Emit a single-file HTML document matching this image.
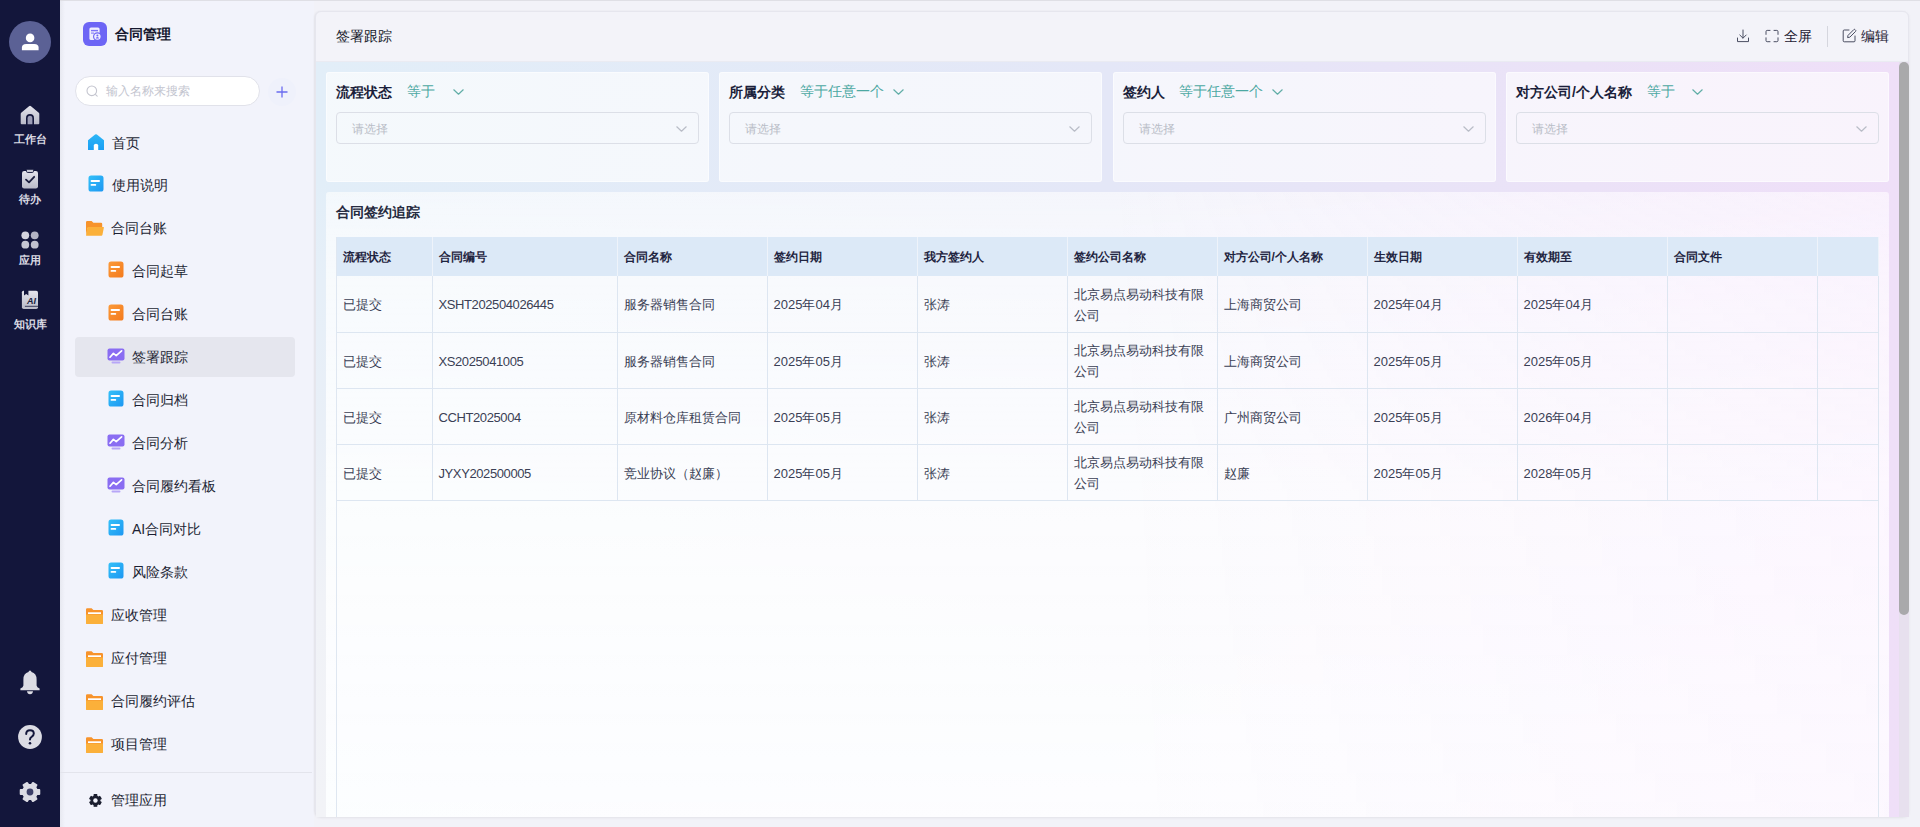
<!DOCTYPE html>
<html><head><meta charset="utf-8">
<style>
*{box-sizing:border-box;margin:0;padding:0}
html,body{width:1920px;height:827px;overflow:hidden;background:#f2f2f8;font-family:"Liberation Sans",sans-serif;color:#1f2337}
.abs{position:absolute}
svg.abs{overflow:visible}
#rail{position:absolute;left:0;top:0;width:60px;height:827px;background:#13163b}
.rtxt{position:absolute;left:0;width:60px;text-align:center;font-size:11.4px;line-height:14px;color:#dadae3;font-weight:bold;white-space:nowrap}
#side{position:absolute;left:60px;top:0;width:254px;height:827px;background:#f2f3fb}
.mi{position:absolute;font-size:14px;line-height:20px;color:#1c1f33;white-space:nowrap}
#topline{position:absolute;left:60px;top:0;width:1860px;height:1px;background:#dfdfe5}
#card{position:absolute;left:315px;top:11px;width:1594px;height:806px;border:1px solid #e6e6ee;border-radius:6px;background:#f3f3f9;overflow:hidden;box-shadow:0 1px 3px rgba(0,0,0,0.06),-1px 0 2px rgba(0,0,0,0.04)}
#body{position:absolute;left:316px;top:62px;width:1583px;height:755px;background:linear-gradient(90deg,#e2eef8 0%,#e4e7f7 50%,#ebe2f7 80%,#efdff8 100%)}
#track{position:absolute;left:1899px;top:62px;width:10px;height:755px;background:#e7e0ee}
#thumb{position:absolute;left:1899px;top:62px;width:10px;height:553px;border-radius:5px 5px 5px 5px;background:#a9a9ab}
.panel{position:absolute;top:72px;width:383px;height:110px;border-radius:3px;background:linear-gradient(90deg,rgba(255,255,255,0.64),rgba(255,255,255,0.64));box-shadow:inset 0 0 0 1px rgba(255,255,255,0.5)}
.plabel{position:absolute;top:82px;font-size:14px;line-height:20px;font-weight:bold;color:#1b1f3b;white-space:nowrap}
.pop{position:absolute;top:81px;margin-left:-1px;font-size:14px;line-height:20px;color:#4ca8a2;white-space:nowrap}
.sel{position:absolute;top:112px;width:363px;height:32px;border:1px solid #dcdfe7;border-radius:4px}
.ph{position:absolute;top:121px;font-size:12px;line-height:16px;color:#b9bdc7;white-space:nowrap}
#tcard{position:absolute;left:326px;top:192px;width:1563px;height:625px;border-radius:3px 3px 0 0;background:linear-gradient(90deg,rgba(250,238,255,0) 50%,rgba(250,238,255,0.3) 100%),linear-gradient(180deg,rgba(255,255,255,0.62) 0px,rgba(255,255,255,0.74) 90px,rgba(255,255,255,0.86) 300px,rgba(255,255,255,0.9) 100%)}
#tbox{position:absolute;left:336px;top:237px;width:1543px;height:580px;border-left:1px solid #dfe7f1;border-right:1px solid #dfe7f1}
table{position:absolute;left:337px;top:237px;border-collapse:collapse;table-layout:fixed}
th{background:#dce9f7;height:39px;font-size:12px;font-weight:bold;text-align:left;padding:2px 0 0 6px;color:#1f2440;border-right:1px solid #eef3fa;white-space:nowrap}
td{height:56px;font-size:13px;line-height:21px;text-align:left;padding:2px 0 0 6px;color:#3a3f55;border-right:1px solid #dde6f1;border-bottom:1px solid #dde6f1}
td:nth-child(2){letter-spacing:-0.4px}
</style></head><body>
<div id="rail"></div>

<!-- avatar -->
<div class="abs" style="left:9px;top:21px;width:42px;height:42px;border-radius:50%;background:#5b6195"></div>
<svg class="abs" style="left:18px;top:30px" width="24" height="24" viewBox="0 0 24 24">
 <circle cx="12.1" cy="7.9" r="4.3" fill="#fff"/>
 <path d="M3.9 20.3 L3.9 17.6 Q3.9 13.9 8.2 13.9 L16.3 13.9 Q20.6 13.9 20.6 17.6 L20.6 20.3 Z" fill="#fff"/>
</svg>
<!-- home -->
<svg class="abs" style="left:20px;top:105px" width="20" height="20" viewBox="0 0 20 20">
 <defs><linearGradient id="gr1" x1="0" y1="0" x2="0" y2="1"><stop offset="0" stop-color="#e4e4ec"/><stop offset="1" stop-color="#b9bac8"/></linearGradient></defs>
 <path d="M1.2 7.8 L9 1.2 Q10 0.4 11 1.2 L18.8 7.8 Q19.3 8.2 19.3 9 L19.3 18.2 Q19.3 19.2 18.3 19.2 L14 19.2 L14 13.2 Q14 9 10 9 Q6 9 6 13.2 L6 19.2 L1.7 19.2 Q0.7 19.2 0.7 18.2 L0.7 9 Q0.7 8.2 1.2 7.8Z" fill="url(#gr1)"/>
 <path d="M7.6 19.2 L7.6 13.4 Q7.6 10.8 10 10.8 Q12.4 10.8 12.4 13.4 L12.4 19.2Z" fill="#9c9db6"/>
</svg>
<div class="rtxt" style="top:132px">工作台</div>
<!-- clipboard -->
<svg class="abs" style="left:21px;top:169px" width="18" height="20" viewBox="0 0 18 20">
 <rect x="1" y="2" width="16" height="17.5" rx="2.2" fill="url(#gr1)"/>
 <rect x="5.5" y="0.3" width="7" height="3.2" rx="1.2" fill="#c9cad6" stroke="#13163b" stroke-width="0.9"/>
 <path d="M5 10.6 L8 13.4 L13.2 7.8" stroke="#1b1e3e" stroke-width="1.8" fill="none" stroke-linecap="round" stroke-linejoin="round"/>
</svg>
<div class="rtxt" style="top:192px">待办</div>
<!-- apps -->
<svg class="abs" style="left:21px;top:231px" width="18" height="18" viewBox="0 0 18 18">
 <circle cx="4.3" cy="4.3" r="3.9" fill="#d4d4de"/><circle cx="13.7" cy="4.3" r="3.9" fill="#b3b4c4"/>
 <circle cx="4.3" cy="13.7" r="3.9" fill="#c6c7d3"/><circle cx="13.7" cy="13.7" r="3.9" fill="#c0c1ce"/>
</svg>
<div class="rtxt" style="top:253px">应用</div>
<!-- knowledge -->
<svg class="abs" style="left:21px;top:290px" width="18" height="20" viewBox="0 0 18 20">
 <path d="M2.4 0.8 L15.2 0.8 Q17 0.8 17 2.6 L17 17.2 Q17 19 15.2 19 L2.7 19 Q0.9 19 0.9 17.2 L0.9 2.3 Q0.9 0.8 2.4 0.8Z" fill="url(#gr1)"/>
 <path d="M3 0 L7.4 0 L7.4 5.4 L5.2 3.9 L3 5.4Z" fill="#13163b"/>
 <path d="M3.9 16.3 L17 16.3" stroke="#2a2d4e" stroke-width="0.9"/>
 <text x="10.6" y="13.6" font-size="9" font-weight="bold" font-style="italic" font-family="Liberation Sans" fill="#1b1e3e" text-anchor="middle">AI</text>
</svg>
<div class="rtxt" style="top:317px">知识库</div>
<!-- bell -->
<svg class="abs" style="left:19px;top:670px" width="22" height="25" viewBox="0 0 22 25">
 <path d="M11 0.5 Q12.3 0.5 12.5 2 Q17.6 3.2 17.6 9.5 L17.6 15.5 Q17.8 17.6 20.6 18.6 L20.6 20.2 L1.4 20.2 L1.4 18.6 Q4.2 17.6 4.4 15.5 L4.4 9.5 Q4.4 3.2 9.5 2 Q9.7 0.5 11 0.5Z" fill="#dcdce4"/>
 <path d="M8 21.2 L14 21.2 Q13.6 24.2 11 24.2 Q8.4 24.2 8 21.2Z" fill="#dcdce4"/>
</svg>
<!-- help -->
<svg class="abs" style="left:17px;top:724px" width="26" height="26" viewBox="0 0 26 26">
 <circle cx="13" cy="13" r="11.9" fill="#dcdce4"/>
 <path d="M9.2 10 Q9.2 6.2 13 6.2 Q16.8 6.2 16.8 9.6 Q16.8 11.6 14.6 12.8 Q13 13.6 13 15.6" stroke="#13163b" stroke-width="2" fill="none" stroke-linecap="round"/>
 <circle cx="13" cy="19.3" r="1.3" fill="#13163b"/>
</svg>
<!-- gear -->
<svg class="abs" style="left:17.7px;top:779.8px" width="24" height="24" viewBox="0 0 24 24">
 <path d="M21.27 9.93 L21.27 14.07 L18.78 14.12 L17.23 16.81 L18.43 18.99 L14.84 21.07 L13.55 18.93 L10.45 18.93 L9.16 21.07 L5.57 18.99 L6.77 16.81 L5.22 14.12 L2.73 14.07 L2.73 9.93 L5.22 9.88 L6.77 7.19 L5.57 5.01 L9.16 2.93 L10.45 5.07 L13.55 5.07 L14.84 2.93 L18.43 5.01 L17.23 7.19 L18.78 9.88Z" fill="#dcdce4" stroke="#dcdce4" stroke-width="2" stroke-linejoin="round"/>
 <circle cx="12" cy="12" r="3.4" fill="#3d4068"/>
</svg>

<div id="side"></div>
<div class="abs" style="left:60px;top:0;width:5px;height:827px;background:linear-gradient(90deg,rgba(220,222,230,0.5),rgba(220,222,230,0))"></div>

<!-- logo -->
<svg class="abs" style="left:83px;top:22px" width="24" height="24" viewBox="0 0 24 24">
 <rect x="0" y="0" width="24" height="24" rx="6" fill="#6d65f5"/>
 <rect x="6.4" y="5.4" width="10.2" height="12.6" rx="1.6" fill="#efeefe"/>
 <rect x="8" y="7.9" width="7" height="1.4" fill="#7b72f6"/>
 <rect x="8" y="10.4" width="3" height="1.4" fill="#9a93f7"/>
 <circle cx="14.4" cy="14.6" r="4.4" fill="#6d65f5"/>
 <circle cx="14.4" cy="14.6" r="3.2" fill="#efeefe"/>
 <circle cx="14.4" cy="13.6" r="1" fill="#6d65f5"/>
 <path d="M12.8 16.6 Q12.8 14.9 14.4 14.9 Q16 14.9 16 16.6Z" fill="#6d65f5"/>
</svg>
<div class="abs" style="left:115px;top:24px;font-size:14px;line-height:20px;font-weight:bold;color:#15182e">合同管理</div>
<!-- search -->
<div class="abs" style="left:75px;top:76px;width:185px;height:30px;border-radius:15px;background:#fff;border:1px solid #e1e2ea"></div>
<svg class="abs" style="left:86px;top:85px" width="13" height="13" viewBox="0 0 13 13">
 <circle cx="5.8" cy="5.8" r="4.8" stroke="#c4c5cf" stroke-width="1.1" fill="none"/>
 <path d="M9.6 9.6 L11.2 11.2" stroke="#c4c5cf" stroke-width="1.1" stroke-linecap="round"/>
</svg>
<div class="abs" style="left:106px;top:83px;font-size:12px;line-height:16px;color:#c3c5cf">输入名称来搜索</div>
<div class="abs" style="left:268px;top:78px;width:28px;height:28px;border-radius:50%;background:#eff1fb"></div>
<svg class="abs" style="left:276px;top:86px" width="12" height="12" viewBox="0 0 12 12">
 <path d="M6 0.5 L6 11.5 M0.5 6 L11.5 6" stroke="#6a6cf0" stroke-width="1.3"/>
</svg>
<!-- selected bg -->
<div class="abs" style="left:75px;top:337px;width:220px;height:40px;border-radius:4px;background:#e5e6ee"></div>
<!-- home icon -->
<svg class="abs" style="left:88px;top:133.5px" width="16" height="16" viewBox="0 0 16 16">
 <defs><linearGradient id="gh" x1="0" y1="0" x2="0" y2="1"><stop offset="0" stop-color="#2db6f6"/><stop offset="1" stop-color="#1a9ef4"/></linearGradient></defs>
 <path d="M0 6.3 L7.1 0.5 Q8 -0.2 8.9 0.5 L16 6.3 L16 16.1 L0 16.1Z" fill="url(#gh)"/>
 <path d="M5.8 16.1 L5.8 11.6 Q5.8 9.8 8 9.8 Q10.2 9.8 10.2 11.6 L10.2 16.1Z" fill="#fff"/>
</svg>
<div class="mi" style="left:112px;top:133px">首页</div>
<svg class="abs" style="left:88px;top:175px" width="16" height="17" viewBox="0 0 16 17">
 <defs><linearGradient id="gd1" x1="0" y1="0" x2="1" y2="1"><stop offset="0" stop-color="#34c0f8"/><stop offset="1" stop-color="#1d97f2"/></linearGradient></defs>
 <rect x="0.5" y="0.5" width="15" height="16" rx="2.6" fill="url(#gd1)"/>
 <rect x="2.6" y="5" width="9.4" height="1.9" rx="0.9" fill="#fff"/>
 <rect x="2.6" y="8.9" width="5.6" height="1.9" rx="0.9" fill="#fff"/>
</svg>
<div class="mi" style="left:112px;top:175px">使用说明</div>
<svg class="abs" style="left:86px;top:221px" width="18" height="15" viewBox="0 0 18 15">
 <path d="M0 1.2 Q0 0 1.2 0 L5.6 0 L7.4 1.8 L15 1.8 Q16.2 1.8 16.2 3 L16.2 7 L1.6 7 L0 14.8Z" fill="#f7932b"/>
 <path d="M1.6 6 L17.5 6 Q18 6 17.9 6.5 L16.4 14 Q16.2 14.8 15.4 14.8 L0.5 14.8 Q0 14.8 0.1 14.3 L1.3 6.4 Q1.35 6 1.6 6Z" fill="#fbb03a"/>
</svg>
<div class="mi" style="left:111px;top:218px">合同台账</div>
<svg class="abs" style="left:108px;top:261px" width="16" height="17" viewBox="0 0 16 17">
 <defs><linearGradient id="go1" x1="0" y1="0" x2="1" y2="1"><stop offset="0" stop-color="#fb9a3a"/><stop offset="1" stop-color="#f47a1c"/></linearGradient></defs>
 <rect x="0.5" y="0.5" width="15" height="16" rx="2.6" fill="url(#go1)"/>
 <rect x="2.6" y="5" width="9.4" height="1.9" rx="0.9" fill="#fff"/>
 <rect x="2.6" y="8.9" width="5.6" height="1.9" rx="0.9" fill="#fff"/>
</svg>
<div class="mi" style="left:132px;top:261px">合同起草</div>
<svg class="abs" style="left:108px;top:304px" width="16" height="17" viewBox="0 0 16 17">
 <defs><linearGradient id="go2" x1="0" y1="0" x2="1" y2="1"><stop offset="0" stop-color="#fb9a3a"/><stop offset="1" stop-color="#f47a1c"/></linearGradient></defs>
 <rect x="0.5" y="0.5" width="15" height="16" rx="2.6" fill="url(#go2)"/>
 <rect x="2.6" y="5" width="9.4" height="1.9" rx="0.9" fill="#fff"/>
 <rect x="2.6" y="8.9" width="5.6" height="1.9" rx="0.9" fill="#fff"/>
</svg>
<div class="mi" style="left:132px;top:304px">合同台账</div>
<svg class="abs" style="left:107px;top:348px" width="18" height="16" viewBox="0 0 18 16">
 <rect x="0.5" y="0.5" width="17" height="12" rx="2" fill="#8a6df2"/>
 <path d="M3 9.2 L6.4 5.4 L9.2 7.6 L14.6 2.8" stroke="#fff" stroke-width="1.7" fill="none" stroke-linecap="round" stroke-linejoin="round"/>
 <rect x="4.5" y="13.6" width="9" height="2" rx="1" fill="#b7a6f7"/>
</svg>
<div class="mi" style="left:132px;top:347px">签署跟踪</div>
<svg class="abs" style="left:108px;top:390px" width="16" height="17" viewBox="0 0 16 17">
 <defs><linearGradient id="gd2" x1="0" y1="0" x2="1" y2="1"><stop offset="0" stop-color="#34c0f8"/><stop offset="1" stop-color="#1d97f2"/></linearGradient></defs>
 <rect x="0.5" y="0.5" width="15" height="16" rx="2.6" fill="url(#gd2)"/>
 <rect x="2.6" y="5" width="9.4" height="1.9" rx="0.9" fill="#fff"/>
 <rect x="2.6" y="8.9" width="5.6" height="1.9" rx="0.9" fill="#fff"/>
</svg>
<div class="mi" style="left:132px;top:390px">合同归档</div>
<svg class="abs" style="left:107px;top:434px" width="18" height="16" viewBox="0 0 18 16">
 <rect x="0.5" y="0.5" width="17" height="12" rx="2" fill="#8a6df2"/>
 <path d="M3 9.2 L6.4 5.4 L9.2 7.6 L14.6 2.8" stroke="#fff" stroke-width="1.7" fill="none" stroke-linecap="round" stroke-linejoin="round"/>
 <rect x="4.5" y="13.6" width="9" height="2" rx="1" fill="#b7a6f7"/>
</svg>
<div class="mi" style="left:132px;top:433px">合同分析</div>
<svg class="abs" style="left:107px;top:477px" width="18" height="16" viewBox="0 0 18 16">
 <rect x="0.5" y="0.5" width="17" height="12" rx="2" fill="#8a6df2"/>
 <path d="M3 9.2 L6.4 5.4 L9.2 7.6 L14.6 2.8" stroke="#fff" stroke-width="1.7" fill="none" stroke-linecap="round" stroke-linejoin="round"/>
 <rect x="4.5" y="13.6" width="9" height="2" rx="1" fill="#b7a6f7"/>
</svg>
<div class="mi" style="left:132px;top:476px">合同履约看板</div>
<svg class="abs" style="left:108px;top:519px" width="16" height="17" viewBox="0 0 16 17">
 <defs><linearGradient id="gd3" x1="0" y1="0" x2="1" y2="1"><stop offset="0" stop-color="#34c0f8"/><stop offset="1" stop-color="#1d97f2"/></linearGradient></defs>
 <rect x="0.5" y="0.5" width="15" height="16" rx="2.6" fill="url(#gd3)"/>
 <rect x="2.6" y="5" width="9.4" height="1.9" rx="0.9" fill="#fff"/>
 <rect x="2.6" y="8.9" width="5.6" height="1.9" rx="0.9" fill="#fff"/>
</svg>
<div class="mi" style="left:132px;top:519px">AI合同对比</div>
<svg class="abs" style="left:108px;top:562px" width="16" height="17" viewBox="0 0 16 17">
 <defs><linearGradient id="gd4" x1="0" y1="0" x2="1" y2="1"><stop offset="0" stop-color="#34c0f8"/><stop offset="1" stop-color="#1d97f2"/></linearGradient></defs>
 <rect x="0.5" y="0.5" width="15" height="16" rx="2.6" fill="url(#gd4)"/>
 <rect x="2.6" y="5" width="9.4" height="1.9" rx="0.9" fill="#fff"/>
 <rect x="2.6" y="8.9" width="5.6" height="1.9" rx="0.9" fill="#fff"/>
</svg>
<div class="mi" style="left:132px;top:562px">风险条款</div>
<svg class="abs" style="left:86px;top:607.6px" width="17" height="16" viewBox="0 0 17 16">
 <path d="M0 1.4 Q0 0.2 1.2 0.2 L5.6 0.2 L7.4 2 L15.8 2 Q17 2 17 3.2 L17 14.8 Q17 16 15.8 16 L1.2 16 Q0 16 0 14.8Z" fill="#f7932b"/>
 <rect x="2" y="4.3" width="13" height="1.7" fill="#fff"/>
 <path d="M0 6.6 L17 6.6 L17 14.8 Q17 16 15.8 16 L1.2 16 Q0 16 0 14.8Z" fill="#fbb03a"/>
</svg>
<div class="mi" style="left:111px;top:605px">应收管理</div>
<svg class="abs" style="left:86px;top:650.6px" width="17" height="16" viewBox="0 0 17 16">
 <path d="M0 1.4 Q0 0.2 1.2 0.2 L5.6 0.2 L7.4 2 L15.8 2 Q17 2 17 3.2 L17 14.8 Q17 16 15.8 16 L1.2 16 Q0 16 0 14.8Z" fill="#f7932b"/>
 <rect x="2" y="4.3" width="13" height="1.7" fill="#fff"/>
 <path d="M0 6.6 L17 6.6 L17 14.8 Q17 16 15.8 16 L1.2 16 Q0 16 0 14.8Z" fill="#fbb03a"/>
</svg>
<div class="mi" style="left:111px;top:648px">应付管理</div>
<svg class="abs" style="left:86px;top:693.6px" width="17" height="16" viewBox="0 0 17 16">
 <path d="M0 1.4 Q0 0.2 1.2 0.2 L5.6 0.2 L7.4 2 L15.8 2 Q17 2 17 3.2 L17 14.8 Q17 16 15.8 16 L1.2 16 Q0 16 0 14.8Z" fill="#f7932b"/>
 <rect x="2" y="4.3" width="13" height="1.7" fill="#fff"/>
 <path d="M0 6.6 L17 6.6 L17 14.8 Q17 16 15.8 16 L1.2 16 Q0 16 0 14.8Z" fill="#fbb03a"/>
</svg>
<div class="mi" style="left:111px;top:691px">合同履约评估</div>
<svg class="abs" style="left:86px;top:736.6px" width="17" height="16" viewBox="0 0 17 16">
 <path d="M0 1.4 Q0 0.2 1.2 0.2 L5.6 0.2 L7.4 2 L15.8 2 Q17 2 17 3.2 L17 14.8 Q17 16 15.8 16 L1.2 16 Q0 16 0 14.8Z" fill="#f7932b"/>
 <rect x="2" y="4.3" width="13" height="1.7" fill="#fff"/>
 <path d="M0 6.6 L17 6.6 L17 14.8 Q17 16 15.8 16 L1.2 16 Q0 16 0 14.8Z" fill="#fbb03a"/>
</svg>
<div class="mi" style="left:111px;top:734px">项目管理</div>
<div class="abs" style="left:60px;top:772px;width:252px;height:1px;background:#e3e4ec"></div>
<svg class="abs" style="left:87.6px;top:792.6px" width="14.9" height="14.9" viewBox="0 0 24 24">
 <path transform="rotate(30 12 12)" d="M21.27 9.93 L21.27 14.07 L18.78 14.12 L17.23 16.81 L18.43 18.99 L14.84 21.07 L13.55 18.93 L10.45 18.93 L9.16 21.07 L5.57 18.99 L6.77 16.81 L5.22 14.12 L2.73 14.07 L2.73 9.93 L5.22 9.88 L6.77 7.19 L5.57 5.01 L9.16 2.93 L10.45 5.07 L13.55 5.07 L14.84 2.93 L18.43 5.01 L17.23 7.19 L18.78 9.88Z" fill="#1a1d2e" stroke="#1a1d2e" stroke-width="2" stroke-linejoin="round"/>
 <circle cx="12" cy="12" r="3.6" fill="#f2f3fb"/>
</svg>
<div class="mi" style="left:111px;top:790px">管理应用</div>

<div id="topline"></div>
<div id="card"></div>
<div id="body"></div>
<div class="abs" style="left:316px;top:61px;width:1592px;height:1px;background:#eaebf2"></div>
<div class="abs" style="left:316px;top:182px;width:10px;height:635px;background:linear-gradient(180deg,#e2eef8 0px,#e6eff8 100px,#e9eff7 250px,#f0f2f7 420px,#f2f3f7 100%)"></div>
<div id="track"></div>
<div id="thumb"></div>
<div class="abs" style="left:336px;top:26px;font-size:14px;line-height:20px;color:#10131f">签署跟踪</div><svg class="abs" style="left:1736px;top:29px" width="14" height="14" viewBox="0 0 14 14">
 <path d="M7 1 L7 9 M3.8 6 L7 9.2 L10.2 6" stroke="#4a4e62" stroke-width="1" fill="none" stroke-linecap="round" stroke-linejoin="round"/>
 <path d="M1.5 9 L1.5 12.6 L12.5 12.6 L12.5 9" stroke="#4a4e62" stroke-width="1" fill="none" stroke-linecap="round" stroke-linejoin="round"/>
</svg><svg class="abs" style="left:1765px;top:28.5px" width="14" height="14" viewBox="0 0 14 14">
 <path d="M1 5.4 L1 2.6 Q1 1.4 2.2 1.4 L5 1.4 M9 1.4 L11.8 1.4 Q13 1.4 13 2.6 L13 5.4 M13 8.8 L13 11.5 Q13 12.7 11.8 12.7 L9 12.7 M5 12.7 L2.2 12.7 Q1 12.7 1 11.5 L1 8.8" stroke="#4a4e62" stroke-width="1" fill="none" stroke-linecap="round" stroke-linejoin="round"/>
</svg><div class="abs" style="left:1784px;top:26px;font-size:14px;line-height:20px;color:#1d2033">全屏</div><div class="abs" style="left:1827px;top:26px;width:1px;height:21px;background:#d5d6de"></div><svg class="abs" style="left:1842px;top:28px" width="15" height="15" viewBox="0 0 15 15">
 <path d="M7 2 L2.2 2 Q1.2 2 1.2 3 L1.2 12.8 Q1.2 13.8 2.2 13.8 L12 13.8 Q13 13.8 13 12.8 L13 8" stroke="#4a4e62" stroke-width="1" fill="none" stroke-linecap="round"/>
 <path d="M5.6 9.6 L6 7.4 L11.8 1.6 Q12.4 1 13 1.6 L13.6 2.2 Q14.2 2.8 13.6 3.4 L7.8 9.2 Z" stroke="#4a4e62" stroke-width="1" fill="none" stroke-linejoin="round"/>
</svg><div class="abs" style="left:1861px;top:26px;font-size:14px;line-height:20px;color:#1d2033">编辑</div><div class="panel" style="left:326px"></div><div class="plabel" style="left:336px">流程状态</div><div class="pop" style="left:408px">等于</div><svg class="abs" style="left:453px;top:89px" width="11" height="6" viewBox="0 0 11 6"><path d="M0.8 0.8 L5.5 5.2 L10.2 0.8" stroke="#62aea7" stroke-width="1.2" fill="none" stroke-linecap="round" stroke-linejoin="round"/></svg><div class="sel" style="left:336px"></div><div class="ph" style="left:352px">请选择</div><svg class="abs" style="left:676px;top:126px" width="11" height="6" viewBox="0 0 11 6"><path d="M0.8 0.8 L5.5 5.2 L10.2 0.8" stroke="#b9bdc7" stroke-width="1.2" fill="none" stroke-linecap="round" stroke-linejoin="round"/></svg><div class="panel" style="left:719px"></div><div class="plabel" style="left:729px">所属分类</div><div class="pop" style="left:801px">等于任意一个</div><svg class="abs" style="left:893px;top:89px" width="11" height="6" viewBox="0 0 11 6"><path d="M0.8 0.8 L5.5 5.2 L10.2 0.8" stroke="#62aea7" stroke-width="1.2" fill="none" stroke-linecap="round" stroke-linejoin="round"/></svg><div class="sel" style="left:729px"></div><div class="ph" style="left:745px">请选择</div><svg class="abs" style="left:1069px;top:126px" width="11" height="6" viewBox="0 0 11 6"><path d="M0.8 0.8 L5.5 5.2 L10.2 0.8" stroke="#b9bdc7" stroke-width="1.2" fill="none" stroke-linecap="round" stroke-linejoin="round"/></svg><div class="panel" style="left:1113px"></div><div class="plabel" style="left:1123px">签约人</div><div class="pop" style="left:1180px">等于任意一个</div><svg class="abs" style="left:1272px;top:89px" width="11" height="6" viewBox="0 0 11 6"><path d="M0.8 0.8 L5.5 5.2 L10.2 0.8" stroke="#62aea7" stroke-width="1.2" fill="none" stroke-linecap="round" stroke-linejoin="round"/></svg><div class="sel" style="left:1123px"></div><div class="ph" style="left:1139px">请选择</div><svg class="abs" style="left:1463px;top:126px" width="11" height="6" viewBox="0 0 11 6"><path d="M0.8 0.8 L5.5 5.2 L10.2 0.8" stroke="#b9bdc7" stroke-width="1.2" fill="none" stroke-linecap="round" stroke-linejoin="round"/></svg><div class="panel" style="left:1506px"></div><div class="plabel" style="left:1516px">对方公司/个人名称</div><div class="pop" style="left:1648px">等于</div><svg class="abs" style="left:1692px;top:89px" width="11" height="6" viewBox="0 0 11 6"><path d="M0.8 0.8 L5.5 5.2 L10.2 0.8" stroke="#62aea7" stroke-width="1.2" fill="none" stroke-linecap="round" stroke-linejoin="round"/></svg><div class="sel" style="left:1516px"></div><div class="ph" style="left:1532px">请选择</div><svg class="abs" style="left:1856px;top:126px" width="11" height="6" viewBox="0 0 11 6"><path d="M0.8 0.8 L5.5 5.2 L10.2 0.8" stroke="#b9bdc7" stroke-width="1.2" fill="none" stroke-linecap="round" stroke-linejoin="round"/></svg><div id="tcard"></div><div class="abs" style="left:336px;top:202px;font-size:14px;line-height:20px;font-weight:bold;color:#262b40">合同签约追踪</div><div id="tbox"></div><table><colgroup><col style="width:95px"><col style="width:185px"><col style="width:150px"><col style="width:150px"><col style="width:150px"><col style="width:150px"><col style="width:150px"><col style="width:150px"><col style="width:150px"><col style="width:150px"><col style="width:61px"></colgroup><tr><th>流程状态</th><th>合同编号</th><th>合同名称</th><th>签约日期</th><th>我方签约人</th><th>签约公司名称</th><th>对方公司/个人名称</th><th>生效日期</th><th>有效期至</th><th>合同文件</th><th></th></tr><tr><td>已提交</td><td>XSHT202504026445</td><td>服务器销售合同</td><td>2025年04月</td><td>张涛</td><td>北京易点易动科技有限<br>公司</td><td>上海商贸公司</td><td>2025年04月</td><td>2025年04月</td><td></td><td></td></tr><tr><td>已提交</td><td>XS2025041005</td><td>服务器销售合同</td><td>2025年05月</td><td>张涛</td><td>北京易点易动科技有限<br>公司</td><td>上海商贸公司</td><td>2025年05月</td><td>2025年05月</td><td></td><td></td></tr><tr><td>已提交</td><td>CCHT2025004</td><td>原材料仓库租赁合同</td><td>2025年05月</td><td>张涛</td><td>北京易点易动科技有限<br>公司</td><td>广州商贸公司</td><td>2025年05月</td><td>2026年04月</td><td></td><td></td></tr><tr><td>已提交</td><td>JYXY202500005</td><td>竞业协议（赵廉）</td><td>2025年05月</td><td>张涛</td><td>北京易点易动科技有限<br>公司</td><td>赵廉</td><td>2025年05月</td><td>2028年05月</td><td></td><td></td></tr></table>
</body></html>
